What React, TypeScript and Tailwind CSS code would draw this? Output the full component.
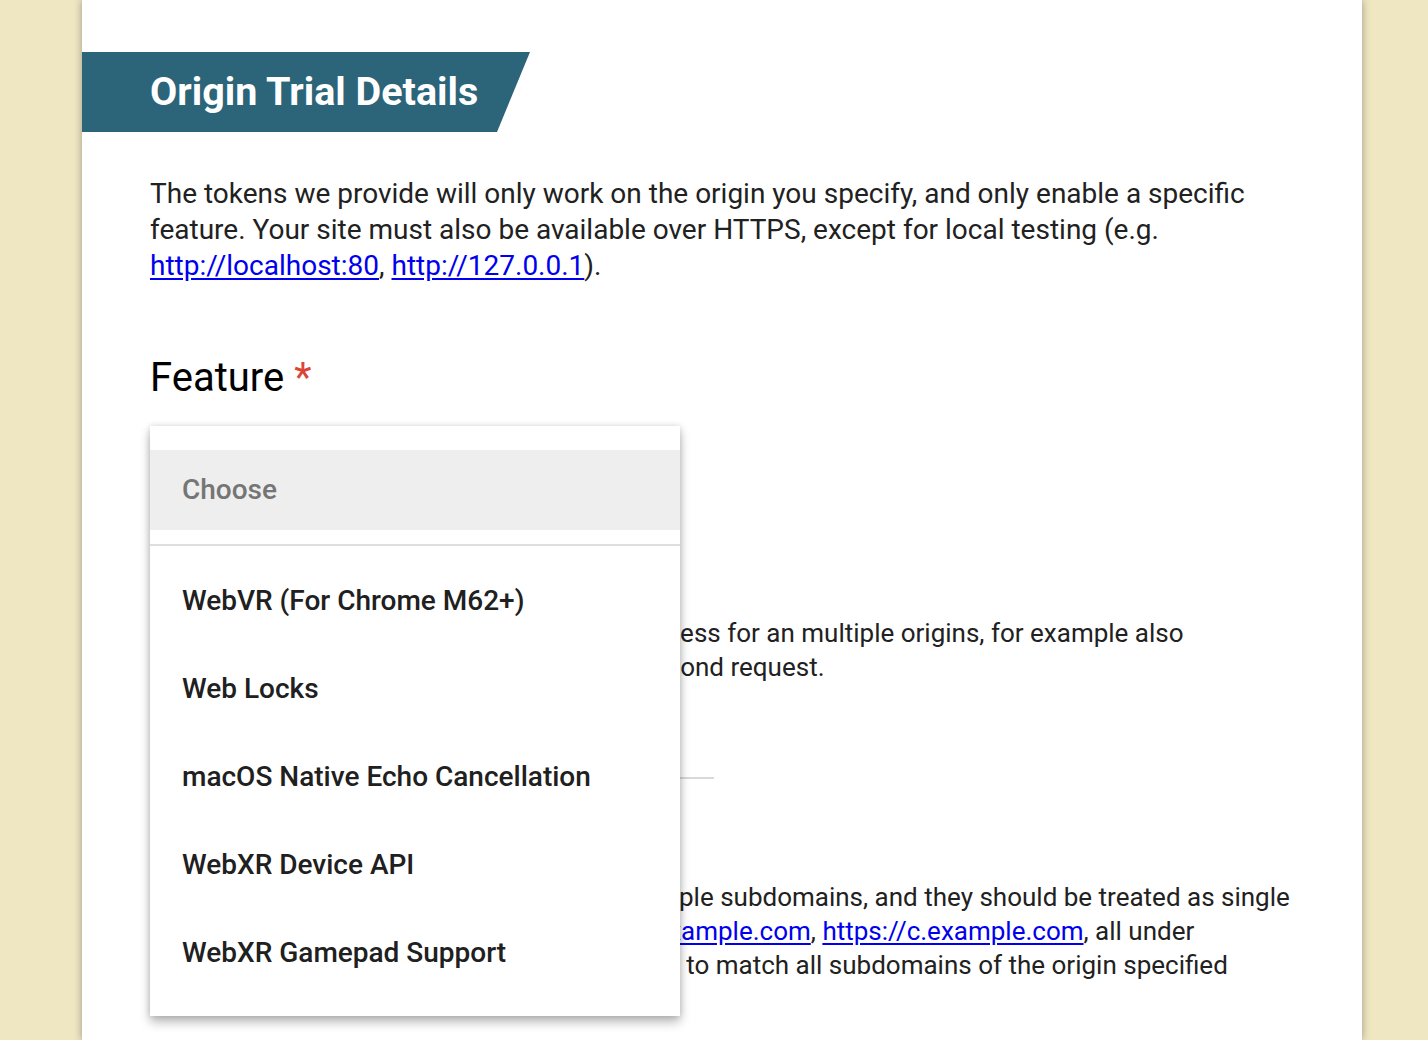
import React from "react";

const font = { fontFamily: "Roboto, 'Noto Sans', Arial, sans-serif" };

function Link({ children }: { children: React.ReactNode }) {
  return <a className="text-[#0000ee] underline underline-offset-[3px]">{children}</a>;
}

const options = [
  "WebVR (For Chrome M62+)",
  "Web Locks",
  "macOS Native Echo Cancellation",
  "WebXR Device API",
  "WebXR Gamepad Support",
];

export default function App() {
  return (
    <div className="h-[1040px] overflow-hidden bg-[#efe6c2]" style={font}>
      <div className="relative ml-[82px] h-full w-[1280px] bg-white shadow-[0_0_8px_rgba(0,0,0,0.35)]">
        <div className="pt-[52px]">
          <div className="flex h-[80px] w-[448px] items-center bg-[#2c6479] pl-[68px] [clip-path:polygon(0_0,100%_0,calc(100%-33px)_100%,0_100%)]">
            <h1 className="text-[39.5px] font-bold leading-none text-white">Origin Trial Details</h1>
          </div>
        </div>

        <div className="px-[68px]">
          <p className="mt-[44px] text-[28px] leading-[36px] text-[#212121]">
            The tokens we provide will only work on the origin you specify, and only enable a specific feature.
            Your site must also be available over HTTPS, except for local testing (e.g.{" "}
            <Link>http://localhost:80</Link>, <Link>http://127.0.0.1</Link>).
          </p>

          <div className="mt-[70px] flex items-baseline text-[40px] leading-[48px] text-black">
            <span>Feature</span>
            <span className="ml-[10px] text-[#db4437]">*</span>
          </div>

          <div className="mt-[28px] h-[72px] w-[530px] border-b-2 border-[#d9d9d9]" />

          <div className="mt-[40px] flex items-baseline text-[40px] leading-[48px] text-black">
            <span>Web Origin</span>
            <span className="ml-[10px] text-[#db4437]">*</span>
          </div>

          <p className="mt-[26px] text-[26px] leading-[34px] text-[#212121]">
            The origin to use the token on. If you need access for an multiple origins, for example also
            <br />
            <Link>https://www.example.com</Link>, please make a second request.
          </p>

          <div className="mt-[57px] h-[38px] w-[564px] border-b-2 border-[#d9d9d9]" />

          <div className="mt-[30px] text-[40px] leading-[48px] text-black">Subdomains</div>

          <p className="mt-[23px] text-[26px] leading-[34px] text-[#212121]">
            Check the checkbox if your origin serves multiple subdomains, and they should be treated as single
            <br />
            origin, e.g. <Link>https://a.example.com</Link>, <Link>https://b.example.com</Link>,{" "}
            <Link>https://c.example.com</Link>, all under
            <br />
            <Link>https://example.com</Link>. Please check the option to match all subdomains of the origin specified
          </p>
        </div>

        <div className="absolute left-[68px] top-[426px] w-[530px] bg-white pb-[19px] pt-[24px] shadow-[0_6px_10px_rgba(0,0,0,0.28),0_0_6px_rgba(0,0,0,0.14)]">
          <div className="flex h-[80px] items-center bg-[#eeeeee] px-[32px] text-[28px] font-medium text-[#757575]">
            Choose
          </div>
          <div className="mt-[14px] mb-[11px] h-[2px] bg-[#dedede]" />
          {options.map((o) => (
            <div key={o} className="flex h-[88px] items-center px-[32px] text-[28px] font-medium text-[#202020]">
              {o}
            </div>
          ))}
        </div>
      </div>
    </div>
  );
}
